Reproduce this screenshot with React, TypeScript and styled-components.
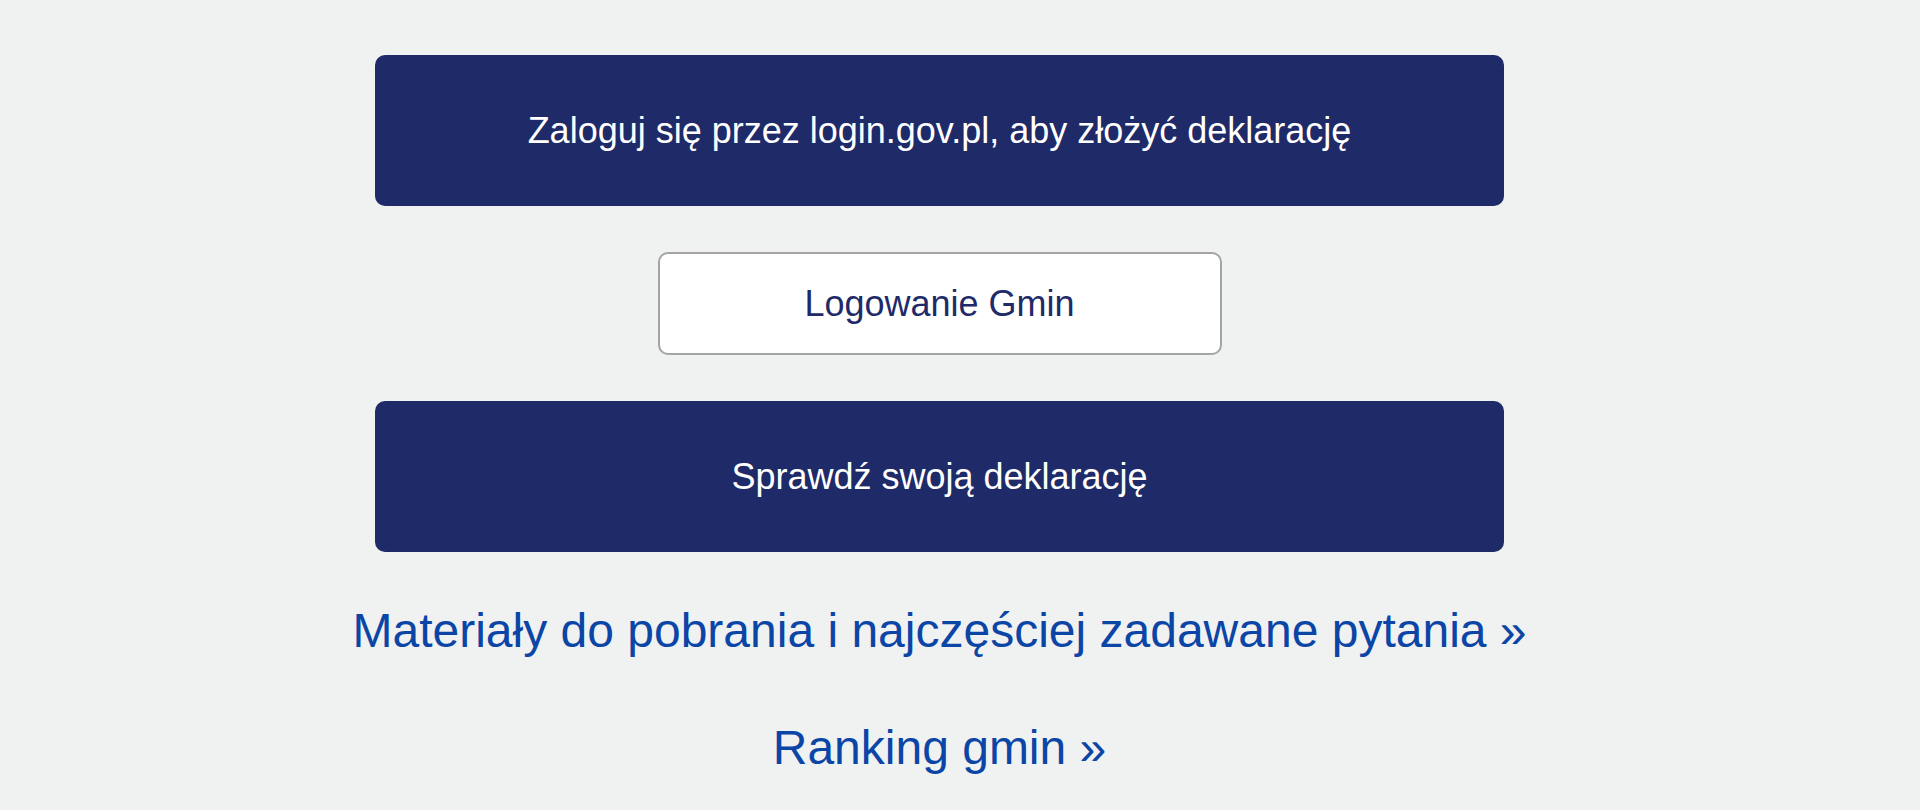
import React from "react";
import styled, { createGlobalStyle } from "styled-components";

const LINKS = [
  { title: "Materiały do pobrania i najczęściej zadawane pytania »", to: "#materialy", gap: 52 },
  { title: "Ranking gmin »", to: "#ranking", gap: 63 },
];

const GlobalStyle = createGlobalStyle`
  html, body {
    margin: 0;
    padding: 0;
    background-color: #f0f1f1;
    font-family: "Liberation Sans", Arial, sans-serif;
  }
`;

const App: React.FC = () => {
  return (
    <>
      <GlobalStyle />
      <Page>
        <PrimaryButton type="button">
          Zaloguj się przez login.gov.pl, aby złożyć deklarację
        </PrimaryButton>
        <SecondaryButton type="button">Logowanie Gmin</SecondaryButton>
        <PrimaryButton type="button">Sprawdź swoją deklarację</PrimaryButton>
        {LINKS.map((item) => (
          <TextLink key={item.to} href={item.to} $gap={item.gap}>
            {item.title}
          </TextLink>
        ))}
      </Page>
    </>
  );
};

export default App;

const Page = styled.main`
  display: flex;
  flex-direction: column;
  align-items: center;
  min-height: 810px;
  box-sizing: border-box;
  padding: 55px 41px 0 0;
`;

const PrimaryButton = styled.button`
  display: flex;
  align-items: center;
  justify-content: center;
  width: 1129px;
  height: 151px;
  border: none;
  border-radius: 10px;
  background-color: #1f2a68;
  color: #ffffff;
  font-family: "Liberation Sans", Arial, sans-serif;
  font-size: 36px;
  cursor: pointer;
`;

const SecondaryButton = styled.button`
  display: flex;
  align-items: center;
  justify-content: center;
  box-sizing: border-box;
  width: 564px;
  height: 103px;
  margin: 46px 0;
  border: 2px solid #a4a4a4;
  border-radius: 10px;
  background-color: #ffffff;
  color: #1f2a68;
  font-family: "Liberation Sans", Arial, sans-serif;
  font-size: 36px;
  cursor: pointer;
`;

const TextLink = styled.a<{ $gap: number }>`
  display: block;
  margin-top: ${(p) => p.$gap}px;
  font-size: 48px;
  line-height: 54px;
  color: #0b45a6;
  text-decoration: none;
`;
